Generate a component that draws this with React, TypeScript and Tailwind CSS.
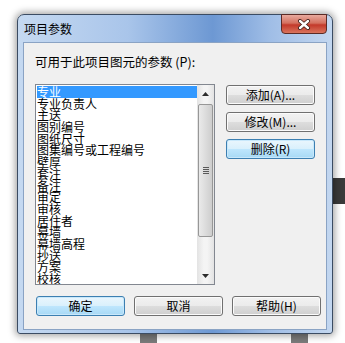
const items = [
  "专业",
  "专业负责人",
  "主送",
  "图别编号",
  "图纸尺寸",
  "图集编号或工程编号",
  "壁厚",
  "套注",
  "备注",
  "审定",
  "审核",
  "居住者",
  "幕墙",
  "幕墙高程",
  "抄送",
  "方案",
  "校核",
];

const font = { fontFamily: '"Noto Sans CJK SC", "DejaVu Sans", sans-serif' };

function WinButton({ label, active }: { label: string; active?: boolean }) {
  return (
    <button
      className={
        active
          ? "h-[20px] w-[89px] rounded-[3px] border border-[#3c7fb1] bg-[linear-gradient(#eaf6fd_0%,#d9f0fc_50%,#bee6fd_51%,#a7d9f5_100%)] text-[12px] leading-[18px] text-black shadow-[inset_0_0_0_1px_#c8e8fb]"
          : "h-[20px] w-[89px] rounded-[3px] border border-[#707070] bg-[linear-gradient(#f2f2f2_0%,#ebebeb_50%,#dddddd_51%,#cfcfcf_100%)] text-[12px] leading-[18px] text-black shadow-[inset_0_0_0_1px_#fbfbfb]"
      }
    >
      {label}
    </button>
  );
}

export default function App() {
  return (
    <div className="relative h-[343px] w-[345px] overflow-hidden bg-white" style={font}>
      {/* background app bits behind the dialog */}
      <div className="absolute right-0 top-[178px] h-[26px] w-[14px] bg-[#3a3a3a]" />
      <div className="absolute bottom-0 left-[140px] h-[12px] w-[17px] bg-[#7a7a7a]" />
      <div className="absolute bottom-0 left-[291px] h-[12px] w-[17px] bg-[#7a7a7a]" />

      <div className="relative ml-[17px] mt-[14px] h-[320px] w-[316px] rounded-t-[7px] rounded-b-[3px] border border-[#3b4c63] bg-[linear-gradient(90deg,#c5d9f1_0%,#a9c5ea_35%,#6d98d3_62%,#9fbde6_80%,#c3d7f0_100%)] shadow-[0_0_7px_2px_rgba(0,0,0,0.35)]">
        {/* title bar */}
        <div className="flex h-[27px] items-center pl-[6px] text-[12px] text-black">项目参数</div>
        <div className="absolute right-[5px] top-[-1px] flex h-[20px] w-[46px] items-center justify-center rounded-b-[4px] border border-[#5b2b26] bg-[linear-gradient(#e8aa9e_0%,#d4705f_45%,#c3392a_55%,#d9745d_100%)]">
          <svg width="14" height="11" viewBox="0 0 14 11">
            <path d="M3 2 L11 9 M11 2 L3 9" stroke="#3a1a16" strokeWidth="4" strokeLinecap="round" />
            <path d="M3 2 L11 9 M11 2 L3 9" stroke="#ffffff" strokeWidth="2.4" strokeLinecap="round" />
          </svg>
        </div>

        {/* client area */}
        <div className="mx-[5px] h-[288px] border border-[#8aa3c4] bg-[#f0f0f0]">
          <div className="flex flex-col pl-[11px] pt-[11px]">
            <div className="h-[16px] text-[12.5px] leading-[16px] text-black">可用于此项目图元的参数 (P):</div>

            <div className="mt-[14px] flex gap-[11px]">
              <div className="flex h-[201px] w-[180px] border border-[#828790] bg-white">
                <div className="flex-1 overflow-hidden pl-[1px] pt-[1px]">
                  {items.map((item, idx) => (
                    <div
                      key={`item-${idx}`}
                      className={
                        idx === 0
                          ? "h-[11.7px] whitespace-nowrap bg-[#3399ff] text-[12px] leading-[11.7px] text-white"
                          : "h-[11.7px] whitespace-nowrap text-[12px] leading-[11.7px] text-black"
                      }
                    >
                      {item}
                    </div>
                  ))}
                </div>
                {/* scrollbar */}
                <div className="flex w-[17px] flex-col bg-[linear-gradient(90deg,#e3e3e3,#f4f4f4_40%,#f4f4f4_60%,#e3e3e3)]">
                  <div className="flex h-[17px] items-center justify-center">
                    <svg width="7" height="4" viewBox="0 0 7 4">
                      <path d="M0 4 L3.5 0 L7 4 Z" fill="#2d2d2d" />
                    </svg>
                  </div>
                  <div className="mx-[1px] mt-[2px] flex h-[133px] items-center justify-center rounded-[2px] border border-[#979797] bg-[linear-gradient(90deg,#eaeaea,#dcdcdc_50%,#cdcdcd)]">
                    <div className="flex flex-col gap-[1px]">
                      <div className="h-[1px] w-[6px] bg-[#5a5a5a]" />
                      <div className="h-[1px] w-[6px] bg-[#5a5a5a]" />
                      <div className="h-[1px] w-[6px] bg-[#5a5a5a]" />
                      <div className="h-[1px] w-[6px] bg-[#5a5a5a]" />
                    </div>
                  </div>
                  <div className="flex-1" />
                  <div className="flex h-[17px] items-center justify-center">
                    <svg width="7" height="4" viewBox="0 0 7 4">
                      <path d="M0 0 L7 0 L3.5 4 Z" fill="#2d2d2d" />
                    </svg>
                  </div>
                </div>
              </div>

              <div className="flex flex-col gap-[7px] pt-[1px]">
                <WinButton label="添加(A)..." />
                <WinButton label="修改(M)..." />
                <WinButton label="删除(R)" active />
              </div>
            </div>

            <div className="mt-[11px] flex gap-[9px] pl-[1px]">
              <WinButton label="确定" active />
              <WinButton label="取消" />
              <WinButton label="帮助(H)" />
            </div>
          </div>
        </div>
      </div>
    </div>
  );
}
